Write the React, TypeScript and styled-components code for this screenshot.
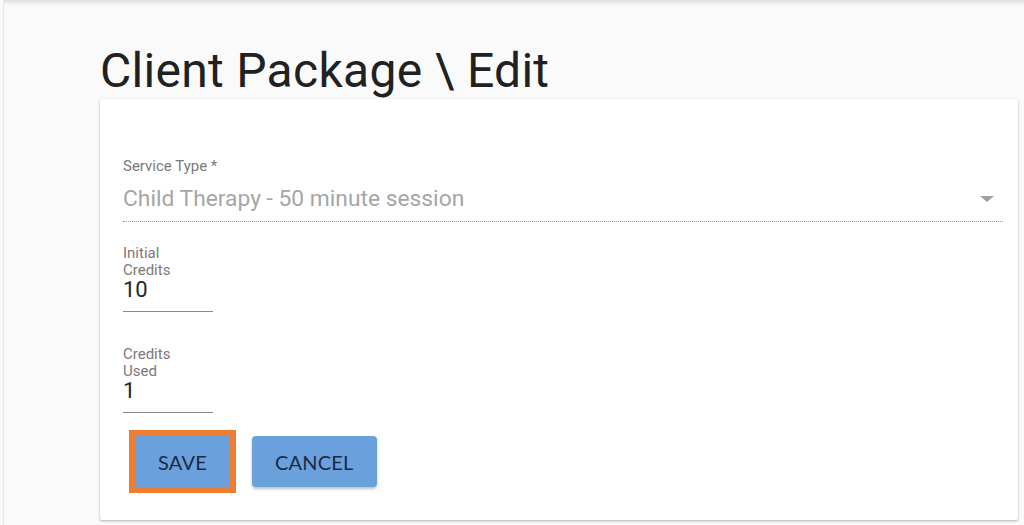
import React from "react";
import styled, { createGlobalStyle } from "styled-components";

const GlobalStyle = createGlobalStyle`
  html, body {
    margin: 0;
    padding: 0;
    background: #fafafa;
    font-family: Roboto, "Noto Sans", sans-serif;
  }
`;

const Page = styled.div`
  min-height: 525px;
  box-sizing: border-box;
  margin-left: 3px;
  border-left: 1px solid #e8e8e8;
  box-shadow: inset 0 6px 5px -4px rgba(0, 0, 0, 0.14);
  padding: 0 6px 5px 96px;
`;

const Title = styled.h1`
  margin: 0;
  padding-top: 43px;
  font-size: 48px;
  line-height: 56px;
  font-weight: 400;
  color: #212121;
  letter-spacing: 0.3px;
`;

const Card = styled.section`
  background: #ffffff;
  border-radius: 2px;
  box-shadow: 0 1px 3px rgba(0, 0, 0, 0.22), 0 1px 2px rgba(0, 0, 0, 0.1);
  padding: 59px 15px 33px 23px;
  display: flex;
  flex-direction: column;
  align-items: flex-start;
`;

const Label = styled.label`
  display: block;
  font-size: 15px;
  line-height: 17px;
  color: #7a7a7a;
`;

const SelectField = styled.div`
  width: 100%;
`;

const SelectValue = styled.div`
  display: flex;
  align-items: center;
  justify-content: space-between;
  margin-top: 9px;
  padding: 0 9px 7px 0;
  font-size: 22.8px;
  line-height: 30px;
  color: #a6a6a6;
  border-bottom: 1px dotted #9a9a9a;
`;

const Arrow = styled.span`
  width: 0;
  height: 0;
  border-left: 7px solid transparent;
  border-right: 7px solid transparent;
  border-top: 6px solid #a0a0a0;
`;

const NumberField = styled.div<{ $gap: number }>`
  width: 90px;
  margin-top: ${(p) => p.$gap}px;
  border-bottom: 1px solid #8c8c8c;
  padding-bottom: 13px;
`;

const NumberValue = styled.div`
  margin-top: 2px;
  font-size: 22px;
  line-height: 17px;
  color: #262626;
`;

const Actions = styled.div`
  display: flex;
  gap: 22px;
  margin: 23px 0 0 12px;
`;

const Button = styled.button<{ $focused?: boolean }>`
  height: 51px;
  padding: 0 23px;
  border: none;
  border-radius: ${(p) => (p.$focused ? "0" : "4px")};
  background: #6aa1dd;
  color: #1c2a45;
  font-family: Lato, "Open Sans", sans-serif;
  font-size: 20px;
  letter-spacing: 0.2px;
  cursor: pointer;
  box-shadow: ${(p) =>
    p.$focused ? "none" : "0 2px 3px rgba(0, 0, 0, 0.25)"};
  outline: ${(p) => (p.$focused ? "6px solid #ed7d31" : "none")};
`;

export default function App() {
  return (
    <>
      <GlobalStyle />
      <Page>
        <Title>Client Package \ Edit</Title>
        <Card>
          <SelectField>
            <Label>Service Type *</Label>
            <SelectValue>
              Child Therapy - 50 minute session
              <Arrow />
            </SelectValue>
          </SelectField>
          <NumberField $gap={23}>
            <Label>
              Initial
              <br />
              Credits
            </Label>
            <NumberValue>10</NumberValue>
          </NumberField>
          <NumberField $gap={34}>
            <Label>
              Credits
              <br />
              Used
            </Label>
            <NumberValue>1</NumberValue>
          </NumberField>
          <Actions>
            <Button $focused>SAVE</Button>
            <Button>CANCEL</Button>
          </Actions>
        </Card>
      </Page>
    </>
  );
}
